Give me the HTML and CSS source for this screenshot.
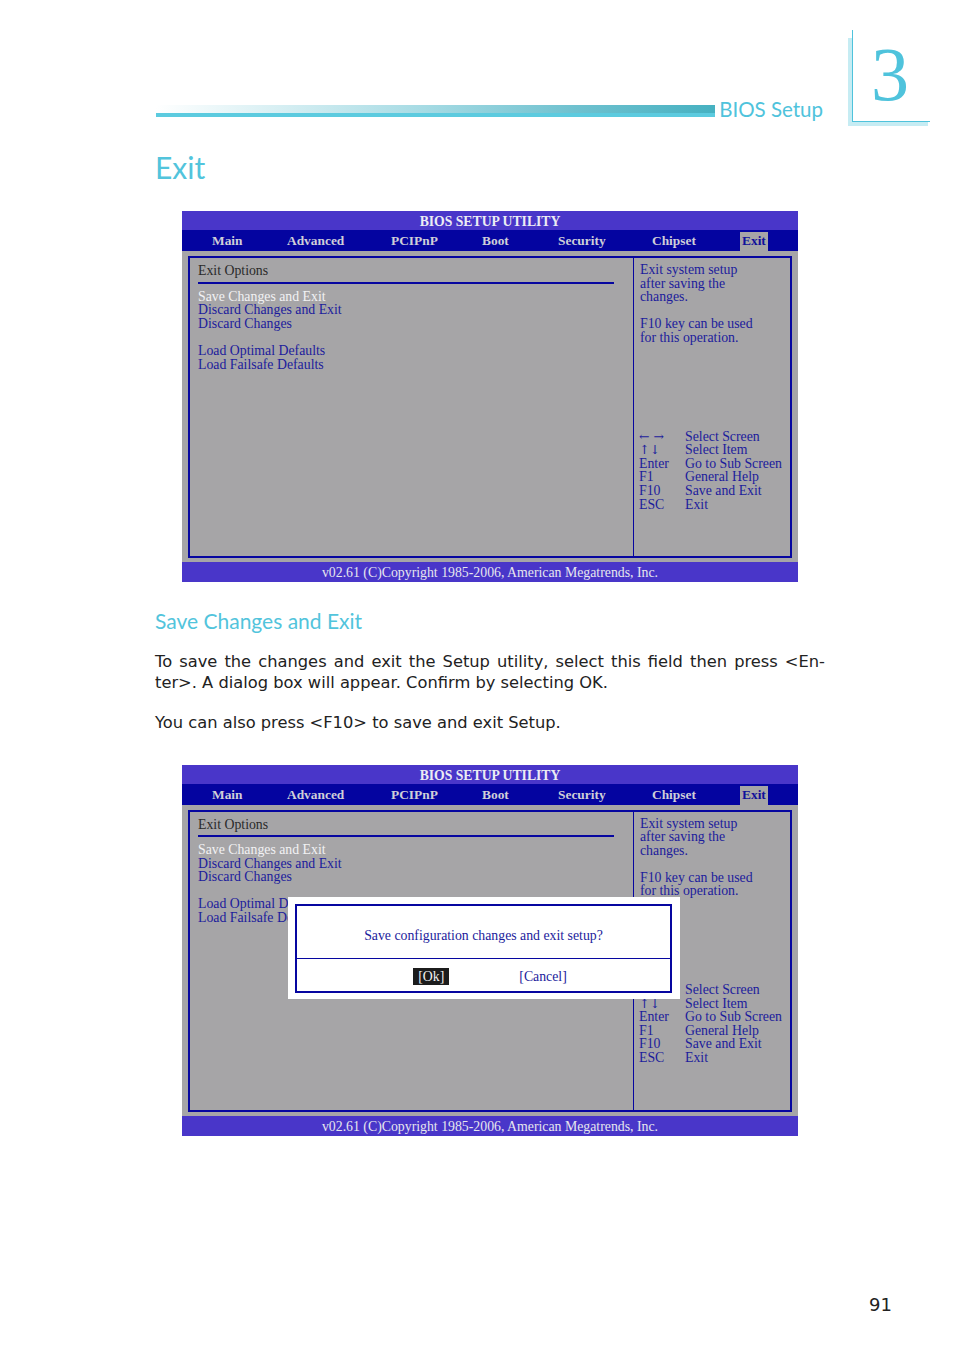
FILE: index.html
```html
<!DOCTYPE html>
<html>
<head>
<meta charset="utf-8">
<link rel="stylesheet" href="styles.css">
</head>
<body>
<div class="page">
  <header class="top">
    <div class="top-left">
      <div class="bar"></div>
      <span class="section">BIOS Setup</span>
    </div>
    <div class="chap"><div class="chap-in">3</div></div>
  </header>

  <main class="content">
    <h1 class="title">Exit</h1>

    <div class="bios">
      <div class="b-title">BIOS SETUP UTILITY</div>
      <div class="b-menu">
        <span>Main</span><span>Advanced</span><span>PCIPnP</span><span>Boot</span><span>Security</span><span>Chipset</span><span class="on">Exit</span>
      </div>
      <div class="b-body">
        <div class="b-box">
          <div class="b-left">
            <div class="b-head">Exit Options</div>
            <div class="b-rule"></div>
            <div class="b-item sel">Save Changes and Exit</div>
            <div class="b-item">Discard Changes and Exit</div>
            <div class="b-item">Discard Changes</div>
            <div class="b-item gap">Load Optimal Defaults</div>
            <div class="b-item">Load Failsafe Defaults</div>
          </div>
          <div class="b-right">
            <div class="b-help">Exit system setup<br>after saving the<br>changes.</div>
            <div class="b-help gap">F10 key can be used<br>for this operation.</div>
            <div class="b-keys">
              <span class="arr">← →</span><span>Select Screen</span>
              <span class="arr">↑↓</span><span>Select Item</span>
              <span>Enter</span><span>Go to Sub Screen</span>
              <span>F1</span><span>General Help</span>
              <span>F10</span><span>Save and Exit</span>
              <span>ESC</span><span>Exit</span>
            </div>
          </div>
        </div>
      </div>
      <div class="b-foot">v02.61 (C)Copyright 1985-2006, American Megatrends, Inc.</div>
    </div>

    <h2 class="sub">Save Changes and Exit</h2>
    <p class="txt"><span class="jline">To save the changes and exit the Setup utility, select this field then press &lt;En-</span>ter&gt;. A dialog box will appear. Confirm by selecting OK.</p>
    <p class="txt">You can also press &lt;F10&gt; to save and exit Setup.</p>

    <div class="bios second">
      <div class="b-title">BIOS SETUP UTILITY</div>
      <div class="b-menu">
        <span>Main</span><span>Advanced</span><span>PCIPnP</span><span>Boot</span><span>Security</span><span>Chipset</span><span class="on">Exit</span>
      </div>
      <div class="b-body">
        <div class="b-box">
          <div class="b-left">
            <div class="b-head">Exit Options</div>
            <div class="b-rule"></div>
            <div class="b-item sel">Save Changes and Exit</div>
            <div class="b-item">Discard Changes and Exit</div>
            <div class="b-item">Discard Changes</div>
            <div class="b-item gap">Load Optimal Defaults</div>
            <div class="b-item">Load Failsafe Defaults</div>
          </div>
          <div class="b-right">
            <div class="b-help">Exit system setup<br>after saving the<br>changes.</div>
            <div class="b-help gap">F10 key can be used<br>for this operation.</div>
            <div class="b-keys">
              <span class="arr">← →</span><span>Select Screen</span>
              <span class="arr">↑↓</span><span>Select Item</span>
              <span>Enter</span><span>Go to Sub Screen</span>
              <span>F1</span><span>General Help</span>
              <span>F10</span><span>Save and Exit</span>
              <span>ESC</span><span>Exit</span>
            </div>
          </div>
        </div>
        <div class="dialog">
          <div class="dlg-in">
            <div class="dlg-msg">Save configuration changes and exit setup?</div>
            <div class="dlg-btns"><span class="btn-ok">[Ok]</span><span class="btn-cancel">[Cancel]</span></div>
          </div>
        </div>
      </div>
      <div class="b-foot">v02.61 (C)Copyright 1985-2006, American Megatrends, Inc.</div>
    </div>
  </main>

  <footer class="pnum">91</footer>
</div>
</body>
</html>
```

FILE: styles.css
```css
html, body {
  margin: 0;
  padding: 0;
  background: #ffffff;
}

.page {
  width: 954px;
  height: 1354px;
  overflow: hidden;
}

/* ---------- header ---------- */
.top {
  display: flex;
  margin-top: 30px;
  padding-left: 156px;
  padding-right: 24px;
}

.top-left {
  flex: 1;
  display: flex;
  align-items: flex-end;
  height: 90px;
}

.bar {
  flex: 1;
  height: 12px;
  margin-bottom: 3px;
  background:
    linear-gradient(to right, #ffffff 0%, #d7eff3 22%, #a6dbe4 48%, #6fc1cf 75%, #46b1c1 100%) top left / 100% 8px no-repeat,
    #5ccbdf;
}

.section {
  font-family: Lato, "Open Sans", sans-serif;
  font-size: 20.5px;
  line-height: 22px;
  color: #4fc3dc;
  margin: 0 25px 0 4px;
  white-space: nowrap;
}

.chap {
  width: 82px;
  height: 96px;
  box-sizing: border-box;
  padding: 0 0 4px 4px;
  background:
    linear-gradient(#c6ecf3, #c6ecf3) 0 8px / 4px 88px no-repeat,
    linear-gradient(#c6ecf3, #c6ecf3) 0 92px / 80px 4px no-repeat;
}

.chap-in {
  height: 92px;
  box-sizing: border-box;
  border-left: 1px solid #4fc3dc;
  border-bottom: 1px solid #4fc3dc;
  padding-top: 6px;
  padding-right: 3px;
  font-family: "Liberation Serif", serif;
  font-size: 76px;
  line-height: 77px;
  color: #4fc3dc;
  text-align: center;
}

/* ---------- content ---------- */
.content {
  padding-left: 155px;
  width: 670px;
}

.title {
  margin: 23px 0 26px;
  font-family: Lato, "Open Sans", sans-serif;
  font-weight: 400;
  font-size: 30px;
  line-height: 36px;
  color: #52c4dc;
}

.sub {
  margin: 26px 0 18px;
  font-family: Lato, "Open Sans", sans-serif;
  font-weight: 400;
  font-size: 21px;
  line-height: 26px;
  color: #52c4dc;
}

.txt {
  margin: 0 0 20px;
  font-family: "DejaVu Sans", Verdana, sans-serif;
  font-size: 16.3px;
  line-height: 20.5px;
  color: #222222;
}

.jline {
  display: block;
  white-space: nowrap;
  text-align: justify;
  text-align-last: justify;
}

/* ---------- BIOS screen ---------- */
.bios {
  margin-left: 27px;
  width: 616px;
  font-family: "Liberation Serif", "Times New Roman", serif;
  font-size: 13.8px;
}

.bios.second {
  margin-top: 31px;
}

.b-title {
  height: 19px;
  line-height: 21px;
  background: #4936c9;
  color: #ececf4;
  font-weight: bold;
  font-size: 13.7px;
  text-align: center;
}

.b-menu {
  height: 21px;
  background: #0404a0;
  display: grid;
  grid-template-columns: 75px 104px 91px 76px 94px 88px auto;
  padding-left: 30px;
  color: #cfcfd8;
  font-weight: bold;
  font-size: 13.4px;
  line-height: 21px;
}

.b-menu .on {
  justify-self: start;
  margin-top: 2px;
  height: 19px;
  line-height: 17px;
  padding: 0 2px;
  background: #a6a5a7;
  color: #10109a;
}

.b-body {
  position: relative;
  background: #a6a5a7;
  padding: 5px 6px 4px 6px;
}

.b-box {
  height: 302px;
  box-sizing: border-box;
  border: 2px solid #0606a0;
  display: flex;
  line-height: 13.6px;
}

.b-left {
  width: 444px;
  box-sizing: border-box;
  padding: 6px 19px 0 8px;
  border-right: 1px solid #0606a0;
}

.b-head {
  color: #2a2a2a;
}

.b-rule {
  height: 2px;
  background: #0606a0;
  margin: 4px 0 6px;
}

.b-item {
  color: #1c1c9c;
  white-space: nowrap;
}

.b-item.sel {
  color: #f2f2f4;
}

.b-item.gap,
.b-help.gap {
  margin-top: 13.6px;
}

.b-right {
  flex: 1;
  padding: 5px 0 0 6px;
  color: #1c1c9c;
  white-space: nowrap;
}

.b-keys {
  margin-top: 85px;
  margin-left: -1px;
  display: grid;
  grid-template-columns: 46px auto;
}

.b-keys .arr {
  font-family: "DejaVu Serif", "Liberation Serif", serif;
  font-size: 12.5px;
}

.b-foot {
  height: 20px;
  line-height: 21px;
  background: #4936c9;
  color: #e6e6ee;
  text-align: center;
}

/* ---------- dialog overlay ---------- */
.dialog {
  position: absolute;
  left: 106px;
  top: 92px;
  width: 392px;
  height: 102px;
  box-sizing: border-box;
  background: #ffffff;
  padding: 7px 8px 6px 7px;
}

.dlg-in {
  height: 89px;
  box-sizing: border-box;
  border: 2px solid #0606a0;
  display: flex;
  flex-direction: column;
}

.dlg-msg {
  height: 53px;
  box-sizing: border-box;
  border-bottom: 1px solid #0606a0;
  color: #1c1c9c;
  text-align: center;
  line-height: 14px;
  padding-top: 23px;
}

.dlg-btns {
  flex: 1;
  display: flex;
  justify-content: center;
  align-items: center;
  gap: 70px;
  padding: 4px 0 0 13px;
}

.btn-ok {
  background: #1c1c1c;
  color: #f0f0f0;
  padding: 1px 5px;
  line-height: 15px;
}

.btn-cancel {
  color: #1c1c9c;
  line-height: 15px;
}

/* ---------- page number ---------- */
.pnum {
  margin-top: 158px;
  padding-right: 62px;
  text-align: right;
  font-family: "DejaVu Sans", Verdana, sans-serif;
  font-size: 18px;
  line-height: 22px;
  color: #222222;
}
```
